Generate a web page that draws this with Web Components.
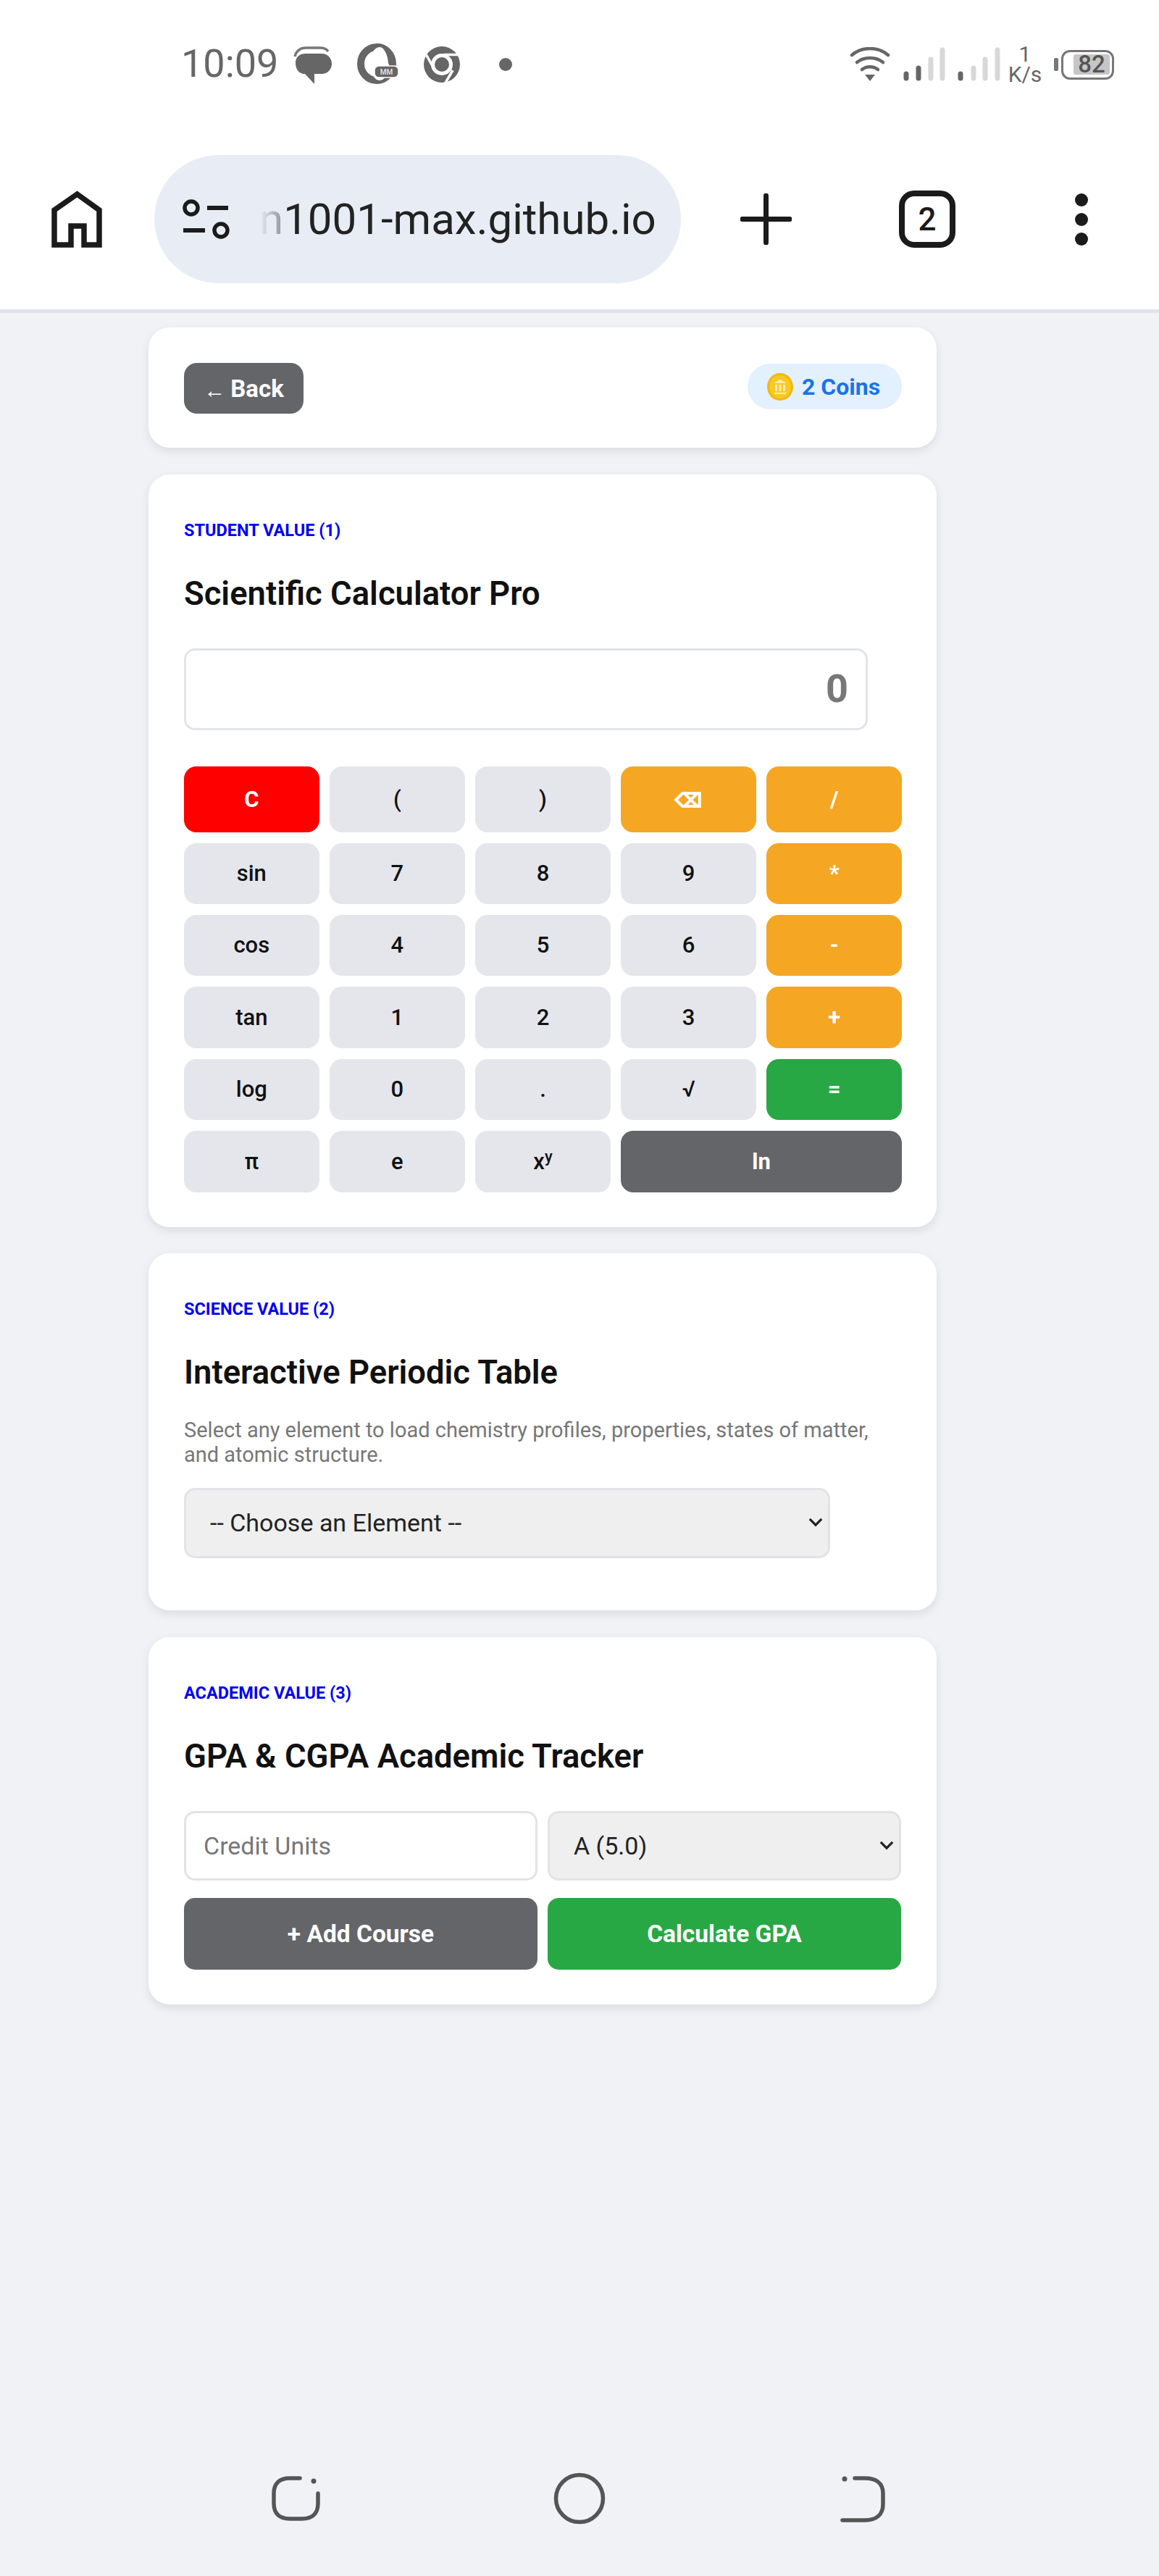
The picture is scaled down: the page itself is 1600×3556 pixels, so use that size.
<!DOCTYPE html>
<html lang="en">
<head>
<meta charset="utf-8">
<title>Student Tools</title>
<style>
    html, body { margin: 0; padding: 0; background: #f0f2f6; }
</style>
</head>
<body>
<app-shell>
    <phone-status slot="top"></phone-status>
    <browser-bar slot="top" url="1001-max.github.io" tabs="2"></browser-bar>

    <top-strip coins="2"></top-strip>

    <tool-card label="Student Value (1)" heading="Scientific Calculator Pro">
        <sci-calc></sci-calc>
    </tool-card>

    <tool-card label="Science Value (2)" heading="Interactive Periodic Table" tail="72.5">
        <periodic-picker></periodic-picker>
    </tool-card>

    <tool-card label="Academic Value (3)" heading="GPA &amp; CGPA Academic Tracker">
        <gpa-tracker></gpa-tracker>
    </tool-card>

    <nav-keys slot="bottom"></nav-keys>
</app-shell>

<script>
const FONT = `"Roboto", "Liberation Sans", sans-serif`;

class AppShell extends HTMLElement {
    constructor() {
        super();
        this.attachShadow({ mode: 'open' });
        this.shadowRoot.innerHTML = `
            <style>
                :host {
                    display: flex;
                    flex-direction: column;
                    height: 3556px;
                    overflow: hidden;
                    background: #f0f2f6;
                    font-family: ${FONT};
                }
                header {
                    background: #fff;
                    height: 427px;
                    border-bottom: 5px solid #dfe4ec;
                    flex: none;
                }
                main {
                    display: flex;
                    flex-direction: column;
                    gap: 36.5px;
                    padding: 20px 0 0 205px;
                    flex: 1;
                }
            </style>
            <header><slot name="top"></slot></header>
            <main><slot></slot></main>
            <slot name="bottom"></slot>
        `;
    }
}

class PhoneStatus extends HTMLElement {
    constructor() {
        super();
        this.attachShadow({ mode: 'open' });
        this.shadowRoot.innerHTML = `
            <style>
                :host {
                    display: flex;
                    align-items: center;
                    height: 178px;
                    padding-left: 250px;
                    color: #666;
                    box-sizing: border-box;
                }
                .time { font-size: 54px; width: 155px; line-height: 60px; margin-top: -2px; }
                svg { display: block; flex: none; }
                .speed {
                    display: flex;
                    flex-direction: column;
                    align-items: center;
                    width: 48px;
                    font-size: 30px;
                    line-height: 28px;
                    margin-left: 8px;
                    color: #666;
                }
                .battery {
                    display: flex;
                    align-items: center;
                    justify-content: center;
                    box-sizing: border-box;
                    width: 73px;
                    height: 41px;
                    border: 3px solid #777;
                    border-radius: 12px;
                    margin-left: 4px;
                    padding: 0 3px 0 14px;
                }
                .battery span {
                    flex: 1;
                    background: #c6c6c6;
                    height: 28px;
                    line-height: 28px;
                    border-radius: 3px;
                    font-size: 33px;
                    font-weight: 500;
                    color: #555;
                    text-align: center;
                }
                .nib { width: 6px; height: 18px; background: #777; border-radius: 2px; margin-left: 16px; }
            </style>

            <span class="time">10:09</span>

            <svg width="56" height="56" viewBox="405 62 56 56">
                <path d="M408 88c0-9 6-13 14-13h22c8 0 14 6 14 14s-6 14-14 14h-10v14l-13-14h-2c-6-1-11-6-11-15z" fill="#666"/>
                <path d="M407 79c2-8 8-12 15-12h20c5 0 9 2 11 5" fill="none" stroke="#777" stroke-width="3.5"/>
            </svg>

            <svg style="margin-left:31px" width="60" height="58" viewBox="492 61 60 58">
                <ellipse cx="520" cy="89" rx="22" ry="23" fill="none" stroke="#666" stroke-width="10"/>
                <ellipse cx="524" cy="89" rx="13" ry="23" fill="#fff"/>
                <path d="M520 61c11 0 20 6 23 17l-7 12c0-14-6-24-16-29z" fill="#666"/>
                <rect x="517" y="92" width="33" height="16" rx="6" fill="#666" stroke="#fff" stroke-width="1.5"/>
                <text x="533.5" y="104" font-size="10" font-weight="700" fill="#ddd" text-anchor="middle" font-family="Roboto">MM</text>
            </svg>

            <svg style="margin-left:32px" width="52" height="52" viewBox="582 62 52 52">
                <circle cx="608" cy="88" r="25" fill="#666"/>
                <circle cx="608" cy="88" r="15" fill="#fff"/>
                <circle cx="608" cy="88" r="10" fill="#666"/>
                <path d="M586 74l13 23M611 74.5h23M612 115l11-19" stroke="#fff" stroke-width="3.5" fill="none"/>
            </svg>

            <svg style="margin-left:52px" width="20" height="20" viewBox="0 0 20 20">
                <circle cx="10" cy="10" r="9" fill="#666"/>
            </svg>

            <svg style="margin-left:465px" width="56" height="48" viewBox="1170 67 56 48">
                <g fill="none" stroke="#666" stroke-width="4.5" stroke-linecap="round">
                    <path d="M1173 78c14-12 36-12 50 0"/>
                    <path d="M1180 88c10-8 26-8 36 0"/>
                    <path d="M1187 98c6-5 16-5 22 0"/>
                </g>
                <path d="M1191 105h14l-7 9z" fill="#666"/>
            </svg>

            <svg style="margin-left:18px" width="136" height="48" viewBox="1244 67 136 48">
                <g stroke-width="7" stroke-linecap="round">
                    <path d="M1248 104v6M1265 96v14M1323 104v6" stroke="#666"/>
                    <path d="M1282 84v26M1298 71v39M1341 96v14M1357 84v26M1374 71v39" stroke="#d8d8d8"/>
                </g>
            </svg>

            <span class="speed"><span>1</span><span>K/s</span></span>
            <span class="nib"></span>
            <span class="battery"><span>82</span></span>
        `;
    }
}

class BrowserBar extends HTMLElement {
    constructor() {
        super();
        this.attachShadow({ mode: 'open' });
    }

    connectedCallback() {
        const url = this.getAttribute('url');
        const tabs = this.getAttribute('tabs');
        this.shadowRoot.innerHTML = `
            <style>
                :host {
                    display: flex;
                    align-items: center;
                    height: 177px;
                    margin-top: 36px;
                    padding-left: 71px;
                    color: #1b1b1b;
                }
                svg { display: block; flex: none; }
                .pill {
                    display: flex;
                    align-items: center;
                    box-sizing: border-box;
                    width: 727px;
                    height: 177px;
                    margin-left: 71px;
                    padding-left: 39px;
                    border-radius: 89px;
                    background: #e8edf5;
                }
                .url { font-size: 60px; margin-left: 40px; white-space: nowrap; color: #222; }
                .fade {
                    background: linear-gradient(90deg, #e8edf5, #8f949c);
                    -webkit-background-clip: text;
                    background-clip: text;
                    color: transparent;
                }
                .tabs {
                    box-sizing: border-box;
                    width: 78px;
                    height: 79px;
                    margin-left: 148px;
                    border: 8px solid #1b1b1b;
                    border-radius: 21px;
                    display: flex;
                    align-items: center;
                    justify-content: center;
                    font-size: 44px;
                    font-weight: 500;
                }
            </style>
            <svg width="71" height="79" viewBox="71 263 71 79">
                <path d="M75 338V290L106.5 268 137 290V338H116V312H98V338Z" fill="none" stroke="#1b1b1b" stroke-width="7.5"/>
            </svg>
            <div class="pill">
                <svg width="66" height="58" viewBox="252 274 66 58">
                    <g fill="none" stroke="#1b1b1b" stroke-width="5.5">
                        <circle cx="264" cy="287" r="9"/>
                        <circle cx="305" cy="318" r="9"/>
                    </g>
                    <path d="M286 287h29M253 318h30" stroke="#1b1b1b" stroke-width="6"/>
                </svg>
                <span class="url"><span class="fade">n</span>${url}</span>
            </div>
            <svg style="margin-left:82px" width="71" height="71" viewBox="0 0 71 71">
                <path d="M35.5 3v65M3 35.5h65" stroke="#1b1b1b" stroke-width="7" stroke-linecap="round"/>
            </svg>
            <span class="tabs">${tabs}</span>
            <svg style="margin-left:165px" width="18" height="72" viewBox="0 0 18 72">
                <circle cx="9" cy="9" r="9" fill="#1b1b1b"/>
                <circle cx="9" cy="36" r="9" fill="#1b1b1b"/>
                <circle cx="9" cy="63" r="9" fill="#1b1b1b"/>
            </svg>
        `;
    }
}

class TopStrip extends HTMLElement {
    constructor() {
        super();
        this.attachShadow({ mode: 'open' });
    }

    connectedCallback() {
        this.shadowRoot.innerHTML = `
            <style>
                :host {
                    display: flex;
                    align-items: center;
                    justify-content: space-between;
                    box-sizing: border-box;
                    width: 1088px;
                    height: 166px;
                    padding: 0 48px 0 49px;
                    background: #fff;
                    border-radius: 29px;
                    box-shadow: 0 5px 14px rgba(0,0,0,.09);
                }
                .back {
                    display: flex;
                    align-items: center;
                    justify-content: center;
                    gap: 7px;
                    width: 165px;
                    height: 70px;
                    margin-top: 2px;
                    padding: 0;
                    border: 0;
                    border-radius: 18px;
                    background: #636569;
                    color: #fff;
                    font: 700 33px ${FONT};
                }
                .coins {
                    display: flex;
                    align-items: center;
                    gap: 12px;
                    box-sizing: border-box;
                    width: 213px;
                    height: 63px;
                    padding-left: 27px;
                    margin-top: -3px;
                    border-radius: 32px;
                    background: #e3f0fe;
                    color: #1a73e8;
                    font-size: 32px;
                    font-weight: 700;
                    white-space: nowrap;
                }
                svg { display: block; flex: none; }
            </style>
            <button class="back"><span style="font-size:30px;margin-top:6px;line-height:30px">←</span>Back</button>
            <span class="coins">
                <svg width="36" height="38" viewBox="0 0 36 38">
                    <ellipse cx="18" cy="19" rx="18" ry="19" fill="#f0b90b"/>
                    <ellipse cx="18" cy="19" rx="15" ry="16" fill="#f8c824"/>
                    <path d="M9 14l9-5 9 5zM10 27h16v2H10zM11 16h3v9h-3zM16.5 16h3v9h-3zM22 16h3v9h-3z" fill="#ffedb0"/>
                </svg>
                ${this.getAttribute('coins')} Coins
            </span>
        `;
    }
}

class ToolCard extends HTMLElement {
    constructor() {
        super();
        this.attachShadow({ mode: 'open' });
    }

    connectedCallback() {
        const tail = this.getAttribute('tail') || 48;
        this.shadowRoot.innerHTML = `
            <style>
                :host {
                    display: block;
                    box-sizing: border-box;
                    width: 1088px;
                    padding: 62px 48px ${tail}px 49px;
                    background: #fff;
                    border-radius: 29px;
                    box-shadow: 0 5px 14px rgba(0,0,0,.09);
                }
                .label {
                    font-size: 23.5px;
                    line-height: 30px;
                    font-weight: 700;
                    color: #0000f5;
                    text-transform: uppercase;
                }
                h2 {
                    margin: 47px 0 49px;
                    font-size: 45.4px;
                    line-height: 52px;
                    font-weight: 600;
                    color: #111;
                }
            </style>
            <div class="label">${this.getAttribute('label')}</div>
            <h2>${this.getAttribute('heading').replace('&', '&amp;')}</h2>
            <slot></slot>
        `;
    }
}

class SciCalc extends HTMLElement {
    constructor() {
        super();
        this.attachShadow({ mode: 'open' });
        this.keys = [
            ['C', 'red'], ['('], [')'], ['<span class="del">⌫</span>', 'op'], ['/', 'op'],
            ['sin'], ['7'], ['8'], ['9'], ['*', 'op'],
            ['cos'], ['4'], ['5'], ['6'], ['-', 'op'],
            ['tan'], ['1'], ['2'], ['3'], ['+', 'op'],
            ['log'], ['0'], ['.'], ['√'], ['=', 'eq'],
            ['π'], ['e'], ['x<sup>y</sup>'], ['ln', 'dark wide']
        ];
        this.render();
    }

    render() {
        const buttons = this.keys.map(k => `<button class="${k[1] || ''}">${k[0]}</button>`).join('');
        this.shadowRoot.innerHTML = `
            <style>
                :host { display: block; }
                .display {
                    box-sizing: border-box;
                    width: 944px;
                    height: 113px;
                    margin-bottom: 50px;
                    padding-right: 24px;
                    border: 3px solid #e2e4e8;
                    border-radius: 15px;
                    font-size: 54px;
                    font-weight: 700;
                    line-height: 105px;
                    text-align: right;
                    color: #777;
                }
                .keys {
                    display: grid;
                    grid-template-columns: repeat(5, 1fr);
                    grid-template-rows: 91px 84px 84px 85px 84px 85px;
                    gap: 15px 14.5px;
                }
                button {
                    border: 0;
                    padding: 0;
                    border-radius: 17px;
                    background: #e5e6eb;
                    color: #111;
                    font: 500 31px ${FONT};
                }
                sup { font-size: 22px; line-height: 0; vertical-align: 10px; }
                .del { font-size: 26px; -webkit-text-stroke: 1px #fff; }
                .red { background: #ff0000; color: #fff; font-weight: 700; }
                .op { background: #f5a623; color: #fff; font-weight: 700; }
                .eq { background: #28a745; color: #fff; font-weight: 700; }
                .dark { background: #636569; color: #fff; font-weight: 700; }
                .wide { grid-column: span 2; }
            </style>
            <div class="display">0</div>
            <div class="keys">${buttons}</div>
        `;
    }
}

class FieldSelect extends HTMLElement {
    constructor() {
        super();
        this.attachShadow({ mode: 'open' });
    }

    connectedCallback() {
        const text = this.getAttribute('text');
        this.shadowRoot.innerHTML = `
            <style>
                :host { display: block; position: relative; height: 97px; }
                select {
                    appearance: none;
                    box-sizing: border-box;
                    width: 100%;
                    height: 100%;
                    padding: 0 0 0 33px;
                    border: 3px solid #e2e3e6;
                    border-radius: 15px;
                    background: #efefef;
                    color: #222;
                    font: 400 34px ${FONT};
                }
                svg { position: absolute; right: 10px; top: 41px; }
            </style>
            <select><option>${text}</option></select>
            <svg width="20" height="13" viewBox="0 0 22 14">
                <path d="M2 2l9 9 9-9" fill="none" stroke="#222" stroke-width="3.5"/>
            </svg>
        `;
    }
}

class PeriodicPicker extends HTMLElement {
    constructor() {
        super();
        this.attachShadow({ mode: 'open' });
        this.shadowRoot.innerHTML = `
            <style>
                :host { display: block; margin-top: -13.5px; }
                p {
                    margin: 0 0 29px;
                    width: 960px;
                    font-size: 29px;
                    line-height: 34px;
                    color: #777;
                }
                field-select { width: 892px; }
            </style>
            <p>Select any element to load chemistry profiles, properties, states of matter, and atomic structure.</p>
            <field-select text="-- Choose an Element --"></field-select>
        `;
    }
}

class GpaTracker extends HTMLElement {
    constructor() {
        super();
        this.attachShadow({ mode: 'open' });
        this.shadowRoot.innerHTML = `
            <style>
                :host {
                    display: grid;
                    grid-template-columns: 488px 488px;
                    grid-template-rows: 96px 99px;
                    gap: 24px 14px;
                }
                input {
                    box-sizing: border-box;
                    width: 100%;
                    height: 96px;
                    padding: 0 0 0 24px;
                    border: 3px solid #e2e3e6;
                    border-radius: 15px;
                    background: #fff;
                    font: 400 34px ${FONT};
                }
                input::placeholder { color: #777; }
                field-select { height: 96px; }
                button {
                    border: 0;
                    padding: 0;
                    border-radius: 15px;
                    color: #fff;
                    font: 700 33.5px ${FONT};
                }
                .add { background: #636569; }
                .calc { background: #28a745; }
            </style>
            <input type="text" placeholder="Credit Units">
            <field-select text="A (5.0)"></field-select>
            <button class="add">+ Add Course</button>
            <button class="calc">Calculate GPA</button>
        `;
    }
}

class NavKeys extends HTMLElement {
    constructor() {
        super();
        this.attachShadow({ mode: 'open' });
        this.shadowRoot.innerHTML = `
            <style>
                :host {
                    display: flex;
                    box-sizing: border-box;
                    height: 146px;
                    padding: 0 0 0 370px;
                    gap: 310px;
                    flex: none;
                }
                svg { display: block; flex: none; }
            </style>
            <svg width="80" height="80" viewBox="370 3410 80 80">
                <path d="M414 3421h-14c-14 0-22 7-22 21v14c0 14 8 21 22 21h17c14 0 22-7 22-21v-14" fill="none" stroke="#555" stroke-width="5.5" stroke-linecap="round"/>
                <circle cx="433" cy="3425" r="3.5" fill="#555"/>
            </svg>
            <svg width="80" height="80" viewBox="760 3410 80 80">
                <circle cx="800" cy="3449" r="32.5" fill="none" stroke="#555" stroke-width="5.5"/>
            </svg>
            <svg width="80" height="80" viewBox="1150 3410 80 80">
                <path d="M1180 3421h14c16 0 25 7 25 21v15c0 14-9 22-25 22h-31" fill="none" stroke="#555" stroke-width="5.5" stroke-linecap="round"/>
                <circle cx="1166" cy="3422" r="3.5" fill="#555"/>
            </svg>
        `;
    }
}

customElements.define('app-shell', AppShell);
customElements.define('phone-status', PhoneStatus);
customElements.define('browser-bar', BrowserBar);
customElements.define('top-strip', TopStrip);
customElements.define('tool-card', ToolCard);
customElements.define('sci-calc', SciCalc);
customElements.define('field-select', FieldSelect);
customElements.define('periodic-picker', PeriodicPicker);
customElements.define('gpa-tracker', GpaTracker);
customElements.define('nav-keys', NavKeys);
</script>
</body>
</html>
